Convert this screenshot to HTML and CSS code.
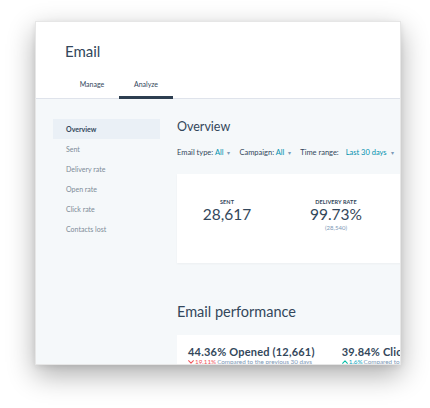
FILE: index.html
```html
<!DOCTYPE html>
<html>
<head>
<meta charset="utf-8">
<link rel="stylesheet" href="styles.css">
</head>
<body>
<div class="page">
  <div class="card">
    <header class="header">
      <h1 class="title">Email</h1>
      <nav class="tabs">
        <span class="tab">Manage</span>
        <span class="tab active">Analyze</span>
      </nav>
    </header>
    <div class="body">
      <aside class="sidebar">
        <div class="nav-item active">Overview</div>
        <div class="nav-item">Sent</div>
        <div class="nav-item">Delivery rate</div>
        <div class="nav-item">Open rate</div>
        <div class="nav-item">Click rate</div>
        <div class="nav-item">Contacts lost</div>
      </aside>
      <main class="main">
        <h2 class="section-title">Overview</h2>
        <div class="filters">
          <span class="filter">Email type: <span class="val">All</span> <span class="caret">&#9662;</span></span>
          <span class="filter">Campaign: <span class="val">All</span> <span class="caret">&#9662;</span></span>
          <span class="filter">Time range: <span class="val gap">Last 30 days</span> <span class="caret">&#9662;</span></span>
        </div>
        <div class="stats">
          <div class="stat">
            <div class="stat-label">SENT</div>
            <div class="stat-value">28,617</div>
          </div>
          <div class="stat">
            <div class="stat-label">DELIVERY RATE</div>
            <div class="stat-value">99.73%</div>
            <div class="stat-sub">(28,540)</div>
          </div>
        </div>
        <h2 class="section-title perf-title">Email performance</h2>
        <div class="perf">
          <div class="perf-item">
            <div class="perf-value">44.36% Opened (12,661)</div>
            <div class="perf-sub"><svg class="chev down" viewBox="0 0 8 5" width="6" height="4"><polyline points="0.8,0.8 4,4 7.2,0.8"/></svg><span class="pct down-txt">19.11%</span> Compared to the previous 30 days</div>
          </div>
          <div class="perf-item">
            <div class="perf-value">39.84% Clicked (5,044)</div>
            <div class="perf-sub"><svg class="chev up" viewBox="0 0 8 5" width="6" height="4"><polyline points="0.8,4.2 4,1 7.2,4.2"/></svg><span class="pct up-txt">1.6%</span> Compared to the previous 30 days</div>
          </div>
        </div>
      </main>
    </div>
  </div>
</div>
</body>
</html>
```

FILE: styles.css
```css
* { box-sizing: border-box; margin: 0; padding: 0; }
html, body { background: #ffffff; }
body {
  font-family: Lato, "Open Sans", Arial, sans-serif;
  color: #33475b;
  width: 430px;
  height: 408px;
  overflow: hidden;
}
.page {
  padding: 21px 0 0 35px;
}
.card {
  width: 366px;
  height: 344px;
  overflow: hidden;
  background: #f5f8fa;
  border: 1px solid #e6e6e6;
  box-shadow: 0 10px 26px rgba(0, 0, 0, 0.32), 0 2px 6px rgba(0, 0, 0, 0.08);
}
.header {
  background: #ffffff;
  height: 77px;
  border-bottom: 1px solid #dfe3eb;
  padding: 20px 0 0 29px;
  display: flex;
  flex-direction: column;
}
.title {
  font-weight: 400;
  font-size: 15px;
  line-height: 18px;
  color: #33475b;
}
.tabs {
  display: flex;
  margin-top: auto;
}
.tab {
  width: 54px;
  text-align: center;
  font-size: 7px;
  line-height: 9px;
  padding-bottom: 7px;
  border-bottom: 3px solid transparent;
  color: #33475b;
  margin-bottom: -1px;
}
.tab.active {
  border-bottom-color: #2d3e50;
}
.body {
  display: flex;
}
.sidebar {
  width: 124px;
  padding: 20px 0 0 17px;
  flex: none;
}
.nav-item {
  height: 20px;
  line-height: 20px;
  padding-left: 13px;
  font-size: 7px;
  color: #7d8b98;
}
.nav-item.active {
  background: #eaf0f6;
  color: #33475b;
  font-weight: 700;
}
.main {
  flex: 1;
  min-width: 0;
  padding: 20px 0 0 17px;
}
.section-title {
  font-weight: 400;
  font-size: 12.5px;
  line-height: 16px;
  color: #33475b;
  white-space: nowrap;
}
.filters {
  margin-top: 13px;
  display: flex;
  gap: 9px;
  font-size: 7.5px;
  line-height: 10px;
  color: #33475b;
  white-space: nowrap;
}
.val { color: #0091ae; }
.val.gap { margin-left: 5px; }
.caret {
  color: #7c98b6;
  font-size: 5.5px;
  margin-left: 2px;
}
.stats {
  margin-top: 16px;
  width: 260px;
  height: 89px;
  background: #ffffff;
  display: grid;
  grid-template-columns: 100px 100px;
  column-gap: 9px;
  padding-top: 24px;
  box-shadow: 0 1px 2px rgba(0, 0, 0, 0.04);
}
.stat {
  text-align: center;
}
.stat-label {
  font-size: 5.5px;
  line-height: 8px;
  font-weight: 700;
  color: #33475b;
  letter-spacing: 0.1px;
}
.stat-value {
  font-size: 15.5px;
  line-height: 17px;
  font-weight: 400;
  color: #33475b;
}
.stat-sub {
  font-size: 6px;
  line-height: 10px;
  color: #7c98b6;
}
.perf-title {
  margin-top: 40px;
  font-size: 14.5px;
  line-height: 18px;
}
.perf {
  margin-top: 14px;
  width: 260px;
  height: 60px;
  background: #ffffff;
  display: flex;
  gap: 27px;
  padding: 11px 0 0 11px;
  white-space: nowrap;
}
.perf-item { flex: none; }
.perf-value {
  font-size: 11px;
  line-height: 12px;
  font-weight: 700;
  color: #33475b;
  letter-spacing: 0.2px;
}
.perf-sub {
  font-size: 6.3px;
  line-height: 8px;
  color: #7c98b6;
  display: flex;
  align-items: center;
  gap: 1px;
}
.chev {
  fill: none;
  stroke-width: 1.4;
  stroke-linecap: round;
  stroke-linejoin: round;
}
.chev.down { stroke: #f2545b; }
.chev.up { stroke: #00bda5; }
.pct { text-decoration: underline; }
.down-txt { color: #f2545b; }
.up-txt { color: #00a4bd; }
```
